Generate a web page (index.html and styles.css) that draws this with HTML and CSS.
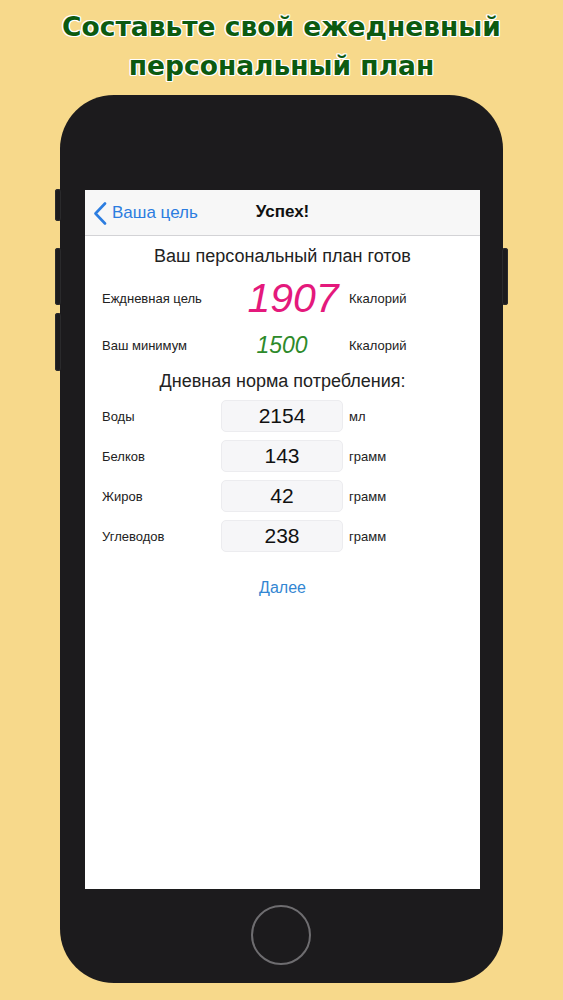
FILE: index.html
```html
<!DOCTYPE html>
<html lang="ru">
<head>
<meta charset="utf-8">
<link rel="stylesheet" href="styles.css">
</head>
<body>
<h1 class="title">Составьте свой ежедневный<br>персональный план</h1>
<div class="phone">
  <span class="btn btn-l1"></span>
  <span class="btn btn-l2"></span>
  <span class="btn btn-l3"></span>
  <span class="btn btn-r1"></span>
  <div class="screen">
    <div class="nav">
      <div class="back">
        <svg class="chev" width="14" height="23" viewBox="0 0 14 23"><path d="M12 1.5 L2.5 11.5 L12 21.5" fill="none" stroke="#2c7de0" stroke-width="2.6" stroke-linecap="round" stroke-linejoin="round"/></svg>
        <span>Ваша цель</span>
      </div>
      <div class="nav-title">Успех!</div>
    </div>
    <div class="content">
      <div class="heading">Ваш персональный план готов</div>
      <div class="row row-big">
        <span class="label">Еждневная цель</span>
        <span class="big pink">1907</span>
        <span class="unit">Ккалорий</span>
      </div>
      <div class="row row-min">
        <span class="label">Ваш минимум</span>
        <span class="mid green">1500</span>
        <span class="unit">Ккалорий</span>
      </div>
      <div class="heading heading2">Дневная норма потребления:</div>
      <div class="boxes">
        <div class="row">
          <span class="label">Воды</span>
          <span class="box">2154</span>
          <span class="unit">мл</span>
        </div>
        <div class="row">
          <span class="label">Белков</span>
          <span class="box">143</span>
          <span class="unit">грамм</span>
        </div>
        <div class="row">
          <span class="label">Жиров</span>
          <span class="box">42</span>
          <span class="unit">грамм</span>
        </div>
        <div class="row">
          <span class="label">Углеводов</span>
          <span class="box">238</span>
          <span class="unit">грамм</span>
        </div>
      </div>
      <div class="next">Далее</div>
    </div>
  </div>
  <div class="home-area"><div class="home"></div></div>
</div>
</body>
</html>
```
FILE: styles.css
```css
html, body {
  margin: 0;
  padding: 0;
}
body {
  background: #f7d98b;
  font-family: "Liberation Sans", Arial, sans-serif;
  width: 563px;
  height: 1000px;
  overflow: hidden;
}
.title {
  margin: 0;
  padding-top: 7px;
  text-align: center;
  font-family: "DejaVu Sans", Verdana, sans-serif;
  font-weight: bold;
  font-size: 26.5px;
  line-height: 39px;
  color: #0c5a10;
  text-shadow:
    -1px -1px 0 #fff, 1px -1px 0 #fff, -1px 1px 0 #fff, 1px 1px 0 #fff,
    0 -1.3px 0 #fff, 0 1.3px 0 #fff, -1.3px 0 0 #fff, 1.3px 0 0 #fff;
  height: 80px;
  box-sizing: border-box;
}
.phone {
  position: relative;
  margin-top: 15px;
  margin-left: 60px;
  width: 443px;
  height: 888px;
  background: #1c1b1d;
  border-radius: 54px;
  padding: 95px 24px 0 25px;
  box-sizing: border-box;
  display: flex;
  flex-direction: column;
}
.btn {
  position: absolute;
  width: 6px;
  background: #1c1b1d;
  border-radius: 3px;
  box-shadow: inset 0 0 0 1px #2a2a2c;
}
.btn-l1 { left: -5px; top: 94px; height: 32px; }
.btn-l2 { left: -5px; top: 153px; height: 57px; }
.btn-l3 { left: -5px; top: 218px; height: 58px; }
.btn-r1 { right: -5px; top: 153px; height: 57px; }
.screen {
  width: 395px;
  height: 699px;
  background: #fff;
  display: flex;
  flex-direction: column;
}
.nav {
  height: 45px;
  border-bottom: 1px solid #d3d3d6;
  background: #f7f7f7;
  position: relative;
  display: flex;
  align-items: center;
  justify-content: center;
}
.back {
  position: absolute;
  left: 8px;
  top: 0;
  height: 45px;
  display: flex;
  align-items: center;
  gap: 5px;
  color: #2c7de0;
  font-size: 17px;
}
.chev { display: block; margin-top: 1px; }
.nav-title {
  font-weight: bold;
  font-size: 17px;
  color: #111;
  margin-top: -2px;
}
.content {
  display: flex;
  flex-direction: column;
  padding: 9px 0 0 17px;
}
.heading {
  text-align: center;
  font-size: 18px;
  line-height: 22px;
  color: #222;
  margin-left: -17px;
}
.row {
  display: grid;
  grid-template-columns: 119px 122px 1fr;
  align-items: center;
  color: #222;
}
.label {
  font-size: 13px;
}
.unit {
  font-size: 13px;
  padding-left: 6px;
}
.row-big {
  height: 44px;
  margin-top: 9px;
}
.big {
  font-size: 41px;
  font-style: italic;
  text-align: center;
  line-height: 44px;
  padding-left: 22px;
}
.pink { color: #e4197c; }
.row-min {
  height: 28px;
  margin-top: 11px;
}
.mid {
  font-size: 23px;
  font-style: italic;
  text-align: center;
  line-height: 28px;
}
.green { color: #2d8a2a; }
.heading2 {
  margin-top: 11px;
}
.boxes {
  display: flex;
  flex-direction: column;
  gap: 8px;
  margin-top: 8px;
}
.boxes .row { height: 32px; }
.box {
  height: 32px;
  box-sizing: border-box;
  background: #f6f6f8;
  border: 1px solid #ececef;
  border-radius: 5px;
  text-align: center;
  font-size: 21px;
  line-height: 30px;
  color: #111;
}
.next {
  margin-top: 26px;
  margin-left: -17px;
  text-align: center;
  font-size: 16px;
  line-height: 20px;
  color: #3386d2;
}
.home-area {
  flex: 1;
  display: flex;
  align-items: center;
  justify-content: center;
  padding-bottom: 2px;
}
.home {
  width: 56px;
  height: 56px;
  border-radius: 50%;
  border: 2px solid #6e6d70;
  margin-left: -3px;
}
```
